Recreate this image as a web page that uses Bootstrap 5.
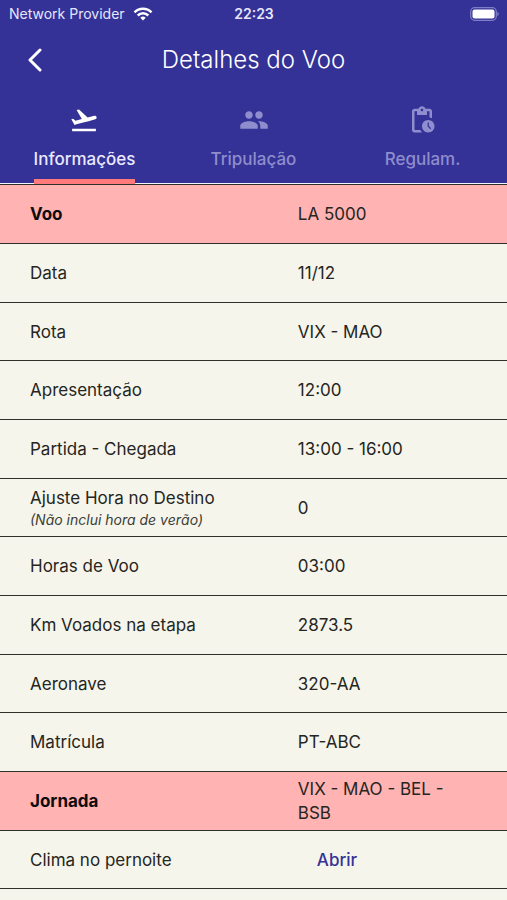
<!DOCTYPE html>
<html lang="pt-BR">
<head>
<meta charset="utf-8">
<meta name="viewport" content="width=device-width, initial-scale=1">
<title>Detalhes do Voo</title>
<link rel="stylesheet" href="https://cdn.jsdelivr.net/npm/bootstrap@5.3.0/dist/css/bootstrap.min.css">
<style>
  :root { --navy: #343296; --cream: #f5f5ec; --rose: #ffb3b3; --coral: #ff7b7b; --tab-muted: #8f8dcd; --rule: #30302b; }
  body { font-family: Inter, "Liberation Sans", sans-serif; font-size: 17px; line-height: 24px; color: #252521; background: var(--cream); }
  .top-area { background: var(--navy); border-bottom: 1px solid #f4f4ff; }
  .status-bar { height: 28px; font-size: 14px; line-height: 20px; color: #e6e6fb; padding: 0 8px 0 9px; }
  .status-bar > * { flex: 1 1 0; }
  .network { gap: 8px; }
  .title-bar { height: 64px; }
  .title-bar h1 { font-size: 24px; line-height: 32px; font-weight: 300; }
  .side-slot { width: 70px; }
  .back-btn { --bs-btn-padding-x: 0; --bs-btn-padding-y: 0; width: 70px; height: 44px; line-height: 1; }
  .flight-tabs { height: 91px; }
  .flight-tabs .nav-link { height: 92px; padding: 13px 0 0; color: var(--tab-muted); font-weight: 500; line-height: 24px; border-radius: 0; }
  .flight-tabs .nav-link.active { color: #e9e9ff; }
  .tab-body { height: 79px; gap: 12px; border-bottom: 5px solid transparent; }
  .active .tab-body { border-bottom-color: var(--coral); }
  .active svg { color: #fff; }
  .flight-table { table-layout: fixed; border-collapse: separate; border-spacing: 0; --bs-table-bg: transparent; --bs-table-color: #252521; }
  .flight-table tr > * { height: 59px; padding: 0 30px; vertical-align: middle; font-weight: 400; border: 0; border-top: 1px solid var(--rule); }
  .flight-table tr:nth-child(3n) > * { height: 58px; }
  .flight-table tr > td { padding-left: 19px; }
  .flight-table tr:last-child > * { height: 59px; border-bottom: 1px solid var(--rule); }
  .label-col { width: 55%; }
  .flight-table .section-row > * { background: var(--rose); }
  .flight-table .section-row > th { font-weight: 700; color: #100b0b; }
  .note { font-size: 14px; line-height: 20px; color: #3c3c37; }
  .open-btn { --bs-btn-color: var(--navy); --bs-btn-padding-x: 18px; --bs-btn-padding-y: 6px; --bs-btn-font-size: 17px; --bs-btn-font-weight: 500; --bs-btn-line-height: 24px; }
</style>
<script src="https://cdn.jsdelivr.net/npm/bootstrap@5.3.0/dist/js/bootstrap.bundle.min.js"></script>
</head>
<body>
<header class="top-area">
  <div class="status-bar d-flex align-items-center">
    <div class="network d-flex align-items-center text-nowrap">
      <span>Network Provider</span>
      <svg width="20" height="14" viewBox="0 0 20 14" fill="none" stroke="#fff" stroke-width="2.5" aria-hidden="true"><path d="M1.5 5.3a12 12 0 0 1 17 0M4.7 8.5a7.5 7.5 0 0 1 10.6 0"/><path d="M10 13.5l-2.7-2.8a3.9 3.9 0 0 1 5.4 0z" fill="#fff" stroke="none"/></svg>
    </div>
    <div class="text-center fw-semibold">22:23</div>
    <div class="d-flex justify-content-end">
      <svg width="29" height="14" viewBox="0 0 29 14" role="img" aria-label="Bateria"><rect x=".7" y=".7" width="25.6" height="12.6" rx="4" fill="none" stroke="#7f7dc6" stroke-width="1.3"/><rect x="2.5" y="2.5" width="22" height="9" rx="2" fill="#fff"/><path d="M27.3 5v4c2-.8 2-3.2 0-4z" fill="#7f7dc6"/></svg>
    </div>
  </div>
  <div class="title-bar d-flex align-items-center text-white">
    <button type="button" class="btn back-btn text-white" aria-label="Voltar">
      <svg width="16" height="24" viewBox="0 0 16 24" fill="none" stroke="currentColor" stroke-width="3" stroke-linecap="round" stroke-linejoin="round"><path d="M13 2L3 12l10 10"/></svg>
    </button>
    <h1 class="flex-grow-1 text-center mb-0">Detalhes do Voo</h1>
    <div class="side-slot"></div>
  </div>
  <nav class="nav nav-fill nav-justified flight-tabs" aria-label="Seções do voo">
    <a class="nav-link active d-flex justify-content-center" href="#info" aria-current="page"><span class="tab-body d-flex flex-column align-items-center">
      <svg width="30" height="30" viewBox="0 0 24 24" fill="currentColor" aria-hidden="true"><path d="M2.5 19h19v2h-19zm19.57-9.36c-.21-.8-1.04-1.28-1.84-1.06L14.92 10l-6.9-6.43-1.93.51 4.14 7.17-4.97 1.33-1.97-1.54-1.45.39 1.82 3.16.77 1.33 1.6-.43 5.31-1.42 4.35-1.16L21 11.49c.81-.23 1.28-1.05 1.07-1.85z"/></svg>
      Informações</span></a>
    <a class="nav-link d-flex justify-content-center" href="#crew"><span class="tab-body d-flex flex-column align-items-center">
      <svg width="30" height="30" viewBox="0 0 24 24" fill="currentColor" aria-hidden="true"><path d="M16 11c1.66 0 2.99-1.34 2.99-3S17.66 5 16 5s-3 1.34-3 3 1.34 3 3 3zm-8 0c1.66 0 2.99-1.34 2.99-3S9.66 5 8 5 5 6.34 5 8s1.34 3 3 3zm0 2c-2.33 0-7 1.17-7 3.5V19h14v-2.5c0-2.33-4.67-3.5-7-3.5zm8 0c-.29 0-.62.02-.97.05 1.16.84 1.97 1.97 1.97 3.45V19h6v-2.5c0-2.33-4.67-3.5-7-3.5z"/></svg>
      Tripulação</span></a>
    <a class="nav-link d-flex justify-content-center" href="#rules"><span class="tab-body d-flex flex-column align-items-center">
      <svg width="30" height="30" viewBox="0 0 24 24" fill="currentColor" aria-hidden="true"><path d="M17 12c-2.76 0-5 2.24-5 5s2.24 5 5 5 5-2.24 5-5-2.24-5-5-5zm1.65 7.35L16.5 17.2V14h1v2.79l1.85 1.85-.7.71zM18 3h-3.18C14.4 1.84 13.3 1 12 1s-2.4.84-2.82 2H6c-1.1 0-2 .9-2 2v15c0 1.1.9 2 2 2h6.11c-.59-.57-1.07-1.25-1.42-2H6V5h2v3h8V5h2v5.08c.71.1 1.38.31 2 .6V5c0-1.1-.9-2-2-2zm-6 2c-.55 0-1-.45-1-1s.45-1 1-1 1 .45 1 1-.45 1-1 1z"/></svg>
      Regulam.</span></a>
  </nav>
</header>
<main id="info">
  <table class="table flight-table mb-0">
    <colgroup><col class="label-col"><col></colgroup>
    <tbody>
      <tr class="section-row"><th scope="row">Voo</th><td>LA 5000</td></tr>
      <tr><th scope="row">Data</th><td>11/12</td></tr>
      <tr><th scope="row">Rota</th><td>VIX - MAO</td></tr>
      <tr><th scope="row">Apresentação</th><td>12:00</td></tr>
      <tr><th scope="row">Partida - Chegada</th><td>13:00 - 16:00</td></tr>
      <tr><th scope="row">Ajuste Hora no Destino<em class="note d-block">(Não inclui hora de verão)</em></th><td>0</td></tr>
      <tr><th scope="row">Horas de Voo</th><td>03:00</td></tr>
      <tr><th scope="row">Km Voados na etapa</th><td>2873.5</td></tr>
      <tr><th scope="row">Aeronave</th><td>320-AA</td></tr>
      <tr><th scope="row">Matrícula</th><td>PT-ABC</td></tr>
      <tr class="section-row"><th scope="row">Jornada</th><td>VIX - MAO - BEL - BSB</td></tr>
      <tr><th scope="row">Clima no pernoite</th><td><button type="button" class="btn open-btn">Abrir</button></td></tr>
    </tbody>
  </table>
</main>
</body>
</html>
